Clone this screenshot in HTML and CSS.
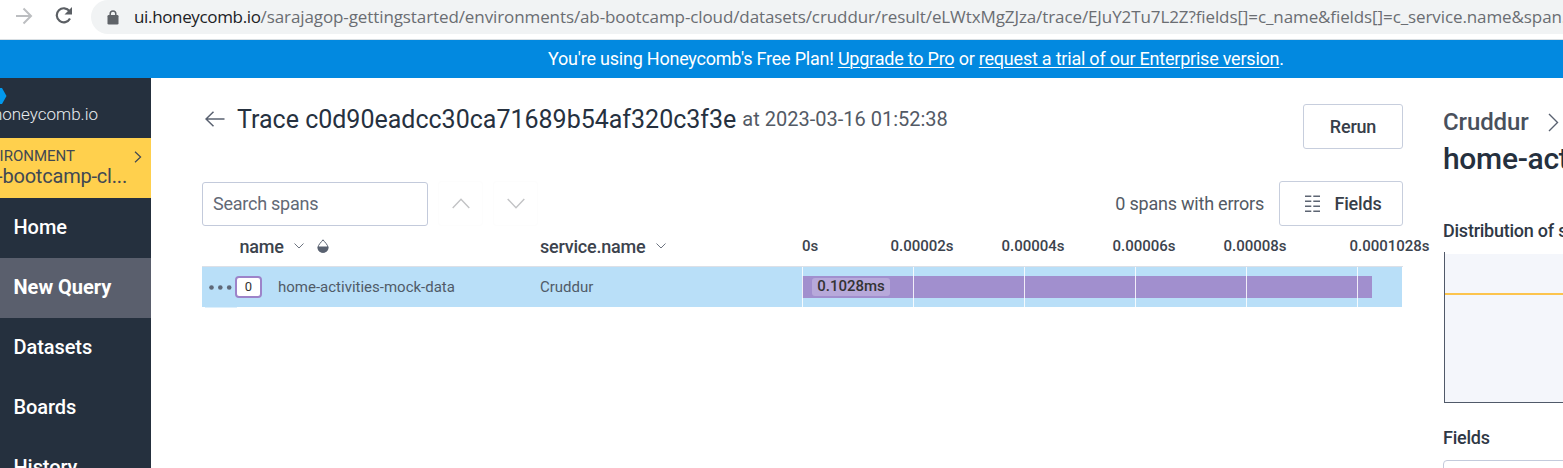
FILE: index.html
```html
<!DOCTYPE html>
<html lang="en">
<head>
<meta charset="utf-8">
<title>Trace - Honeycomb</title>
<link rel="stylesheet" href="styles.css">
</head>
<body>
<div class="browser-bar">
  <svg class="nav-icon forward" width="18" height="18" viewBox="0 0 18 18"><path d="M1 9h15M8.500 1.500L16 9l-7.500 7.500" fill="none" stroke="#bcbec1" stroke-width="2"/></svg>
  <svg class="nav-icon reload" width="20" height="18" viewBox="0 0 20 18"><path d="M15.500 4.200A7 7 0 1 0 16 11.500" fill="none" stroke="#5b5f64" stroke-width="2.200"/><path d="M18 0v7.500h-7.500z" fill="#5b5f64"/></svg>
  <div class="address">
    <svg width="12" height="15" viewBox="0 0 12 15"><rect x="0.500" y="5" width="11" height="9.500" rx="1.300" fill="#5f6368"/><path d="M3.200 5.500V3.800a2.800 2.800 0 0 1 5.600 0v1.700" fill="none" stroke="#5f6368" stroke-width="1.500"/></svg>
    <div class="url"><span class="host">ui.honeycomb.io</span><span class="path">/sarajagop-gettingstarted/environments/ab-bootcamp-cloud/datasets/cruddur/result/eLWtxMgZJza/trace/EJuY2Tu7L2Z?fields[]=c_name&amp;fields[]=c_service.name&amp;span.</span></div>
  </div>
</div>
<div class="banner"><span>You're using Honeycomb's Free Plan! <u>Upgrade to Pro</u> or <u>request a trial of our Enterprise version</u>.</span></div>
<div class="app">
  <nav class="sidebar">
    <div class="logo">
      <svg width="8" height="18" viewBox="0 0 8 18"><path d="M0 1h2l4.500 8L2 17H0z" fill="#0298ec"/></svg>
      <div class="wordmark">honeycomb.io</div>
    </div>
    <div class="environment">
      <div class="env-text"><div class="env-label">ENVIRONMENT</div><div class="env-name">ab-bootcamp-cl...</div></div>
      <svg width="8" height="12" viewBox="0 0 8 12"><path d="M1 .7L6.600 6 1 11.300" fill="none" stroke="#414853" stroke-width="1.200"/></svg>
    </div>
    <a class="nav-item">Home</a>
    <a class="nav-item active">New Query</a>
    <a class="nav-item">Datasets</a>
    <a class="nav-item">Boards</a>
    <a class="nav-item">History</a>
  </nav>
  <main class="trace">
    <header class="trace-header">
      <svg width="20" height="16" viewBox="0 0 20 16"><path d="M19.500 8H1M8.500 .8L1 8l7.500 7.200" fill="none" stroke="#596170" stroke-width="1.500"/></svg>
      <h1 class="title">Trace c0d90eadcc30ca71689b54af320c3f3e</h1>
      <span class="time">at 2023-03-16 01:52:38</span>
      <button class="button rerun">Rerun</button>
    </header>
    <div class="toolbar">
      <div class="search">Search spans</div>
      <div class="step"><svg width="18" height="11" viewBox="0 0 18 11"><path d="M.7 10L9 1.200 17.300 10" fill="none" stroke="#c2c3c5" stroke-width="1.400"/></svg></div>
      <div class="step"><svg width="18" height="11" viewBox="0 0 18 11"><path d="M.7 1L9 9.800 17.300 1" fill="none" stroke="#c2c3c5" stroke-width="1.400"/></svg></div>
      <span class="errors">0 spans with errors</span>
      <button class="button fields">
        <svg width="15" height="17" viewBox="0 0 15 17"><path d="M0 1.300h6.300M8.300 1.300H15M0 6.300h6.300M8.300 6.300H15M0 11.300h6.300M8.300 11.300H15M0 16.200h6.300M8.300 16.200H15" stroke="#5d6573" stroke-width="1.400"/></svg>
        <span>Fields</span>
      </button>
    </div>
    <div class="columns">
      <div class="col-name"><span class="col-label name-label">name</span>
        <svg class="caret" width="10" height="6" viewBox="0 0 10 6"><path d="M.5 .5L5 5 9.500 .5" fill="none" stroke="#6d7480" stroke-width="1"/></svg>
        <svg class="drop" width="12" height="14" viewBox="0 0 12 14"><path d="M6 .8C4.500 3 1 5.700 1 8.700a5 4.700 0 0 0 10 0C11 5.700 7.500 3 6 .8z" fill="#fff" stroke="#596170" stroke-width="1"/><path d="M.7 7.500h10.600v1.200a5.300 4.900 0 0 1-10.600 0z" fill="#596170"/></svg>
      </div>
      <div class="col-service"><span class="col-label service-label">service.name</span><svg class="caret" width="10" height="6" viewBox="0 0 10 6"><path d="M.5 .5L5 5 9.500 .5" fill="none" stroke="#6d7480" stroke-width="1"/></svg></div>
      <div class="ticks"><span>0s</span><span>0.00002s</span><span>0.00004s</span><span>0.00006s</span><span>0.00008s</span><span>0.0001028s</span></div>
    </div>
    <div class="span-row">
      <div class="cell-name">
        <svg width="23" height="5" viewBox="0 0 23 5"><g fill="#5f6878"><circle cx="2.500" cy="2.500" r="2.300"/><circle cx="11.300" cy="2.500" r="2.300"/><circle cx="20.200" cy="2.500" r="2.300"/></g></svg>
        <span class="count">0</span><span class="span-name">home-activities-mock-data</span>
      </div>
      <div class="cell-service">Cruddur</div>
      <div class="timeline"><div class="bar"><span>0.1028ms</span></div></div>
    </div>
    <div class="row-tail"></div>
  </main>
  <aside class="details">
    <div class="crumb"><span>Cruddur</span><svg width="11" height="19" viewBox="0 0 11 19"><path d="M1 1l8.500 8.500L1 18" fill="none" stroke="#596170" stroke-width="1.400"/></svg></div>
    <div class="span-title">home-activities-mock-data</div>
    <div class="section dist">Distribution of span duration</div>
    <div class="chart"><div class="threshold"></div></div>
    <div class="section filter">Fields</div>
    <div class="filter-input"></div>
  </aside>
</div>
</body>
</html>
```

FILE: styles.css
```css
* { box-sizing: border-box; }
body { margin: 0; width: 1563px; height: 468px; overflow: hidden; background: #fff; color: #3c434d; font-family: Roboto, sans-serif; }
svg { display: block; flex: none; }
span, .url, .title { white-space: nowrap; }
.browser-bar { display: flex; height: 40px; border-bottom: 1px solid #d9dfe3; overflow: hidden; }
.forward { margin: 7px 0 0 15px; }
.reload { margin: 7px 0 0 21px; }
.address { display: flex; align-items: center; flex: 1; height: 34px; margin-left: 17px; padding-left: 16px; border-radius: 17px 0 0 17px; background: #f1f3f4; overflow: hidden; }
.url { margin: -2px 0 0 15px; font: 17px "Open Sans", sans-serif; color: #6a6d72; }
.host { display: inline-block; color: #202124; letter-spacing: -0.35px; }
.path { letter-spacing: -0.1px; }
.banner { height: 38px; padding-left: 548px; background: #0289e0; color: #fff; font-size: 18px; line-height: 38px; letter-spacing: -0.22px; }
.banner u { text-underline-offset: 2px; text-decoration-thickness: 1px; }
.app { display: flex; height: 390px; }
.sidebar { width: 151px; flex: none; overflow: hidden; background: #25303e; }
.logo { height: 60px; padding-top: 9px; }
.wordmark { width: 98px; display: flex; justify-content: flex-end; color: #e8ebee; font: 300 17px/18px Roboto, sans-serif; }
.environment { display: flex; height: 60px; background: #ffd04d; color: #414853; }
.env-text { width: 127px; display: flex; flex-direction: column; align-items: flex-end; padding-top: 9px; white-space: nowrap; }
.env-label { padding-right: 52px; font-size: 15px; line-height: 18px; }
.env-name { font-size: 20px; line-height: 22px; letter-spacing: -0.2px; }
.environment svg { margin: 13px 0 0 7px; }
.nav-item { display: block; height: 60px; padding-left: 13.500px; color: #fff; font-size: 20px; font-weight: 500; line-height: 59px; letter-spacing: -0.08px; }
.nav-item.active { background: #5a5f6d; font-weight: 700; letter-spacing: 0; }
.trace { width: 1201px; flex: none; margin-left: 51px; }
.trace-header { display: flex; height: 103px; padding-top: 26px; }
.trace-header > svg { margin: 7px 0 0 2.500px; }
.title { margin: 0 0 0 12.500px; color: #26313f; font-size: 25px; font-weight: 400; line-height: 31px; }
.time { margin-left: 6px; color: #535a65; font-size: 20px; line-height: 31px; }
.button { border: 1px solid #c7cedd; border-radius: 3px; background: #fff; color: #373e49; font: 500 18px Roboto, sans-serif; height: 45px; padding: 0; letter-spacing: -0.2px; }
.rerun { width: 100px; margin-left: auto; }
.toolbar { display: flex; align-items: flex-end; height: 45px; }
.search { width: 226px; height: 44px; border: 1px solid #c3cadb; border-radius: 3px; padding-left: 10px; color: #626976; font-size: 18px; line-height: 42px; letter-spacing: -0.25px; }
.step { display: flex; align-items: center; justify-content: center; width: 45px; height: 45px; margin-left: 10px; border: 1px solid #fdfdfd; border-radius: 3px; }
.step svg { margin-top: -1px; }
.errors { margin-left: auto; color: #535a65; font-size: 18px; line-height: 45px; letter-spacing: -0.22px; }
.fields { display: flex; align-items: center; justify-content: center; gap: 15px; width: 124px; margin-left: 15px; padding-left: 4px; }
.columns { display: flex; height: 41px; border-bottom: 1px solid #dce0e7; }
.col-name { display: flex; flex: none; width: 338px; padding-left: 37.500px; }
.col-service { display: flex; flex: none; width: 262px; }
.col-label { font-size: 18px; font-weight: 500; line-height: 41px; letter-spacing: -0.22px; }
.caret { margin: 17px 0 0 10.500px; }
.drop { margin: 13px 0 0 13px; }
.ticks { display: grid; flex: none; width: 601px; grid-template-columns: 64px repeat(4, 111px) 119px; justify-items: start; font-size: 15px; font-weight: 500; line-height: 40px; }
.ticks span:nth-child(n+2) { margin-left: 24.500px; }
.ticks span:last-child { margin-left: 39.500px; }
.span-row { display: flex; width: 1200px; height: 40px; background: #b9dff8; color: #505b68; font-size: 15px; }
.cell-name { display: flex; align-items: center; width: 338px; padding-left: 7px; }
.count { width: 27px; height: 22px; margin-left: 3px; border: 2px solid #9d83c9; border-radius: 4px; background: #fff; color: #333; font-size: 13px; line-height: 18px; text-align: center; }
.span-name { margin-left: 16px; }
.cell-service { width: 262px; line-height: 40px; }
.timeline { position: relative; flex: 1; padding-top: 9px; }
.timeline::after { content: ""; position: absolute; inset: 0; background: repeating-linear-gradient(90deg, rgba(255,255,255,.85) 0 1px, transparent 1px 111px); }
.bar { display: flex; width: 570px; height: 22px; padding: 2px 0 0 10px; background: #a18fce; }
.bar span { width: 78px; height: 18px; border-radius: 3px; background: #b7a9da; color: #333; font-size: 15px; font-weight: 500; line-height: 17px; text-align: center; }
.row-tail { width: 32px; height: 1px; margin-left: 3px; background: #dceffc; }
.details { width: 160px; flex: none; margin-left: 40px; padding-top: 29px; overflow: hidden; white-space: nowrap; }
.crumb { display: flex; align-items: center; gap: 19px; height: 30px; color: #49505c; font-size: 24px; font-weight: 500; letter-spacing: -0.1px; }
.span-title { color: #25303e; font-size: 30px; font-weight: 500; line-height: 44px; letter-spacing: -0.3px; }
.section { color: #2f3845; font-size: 18px; font-weight: 500; line-height: 22px; letter-spacing: -0.24px; }
.dist { margin-top: 39px; }
.chart { height: 151px; margin: 10px 0 0 1px; padding-top: 41px; border-left: 1px solid #505969; border-bottom: 1px solid #505969; background: linear-gradient(#fff 0 2px, #f4f6fb 2px); }
.threshold { height: 2px; background: #fcc44d; }
.filter { margin-top: 24px; }
.filter-input { height: 44px; margin-top: 11px; border: 1px solid #c3cadb; border-radius: 4px 0 0 4px; }
```
